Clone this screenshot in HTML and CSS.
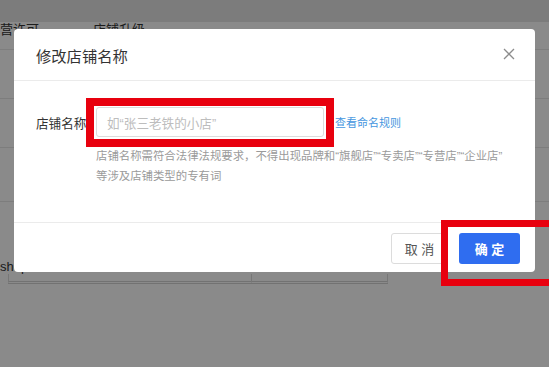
FILE: index.html
```html
<!DOCTYPE html>
<html lang="zh-CN">
<head>
<meta charset="utf-8">
<title>修改店铺名称</title>
<link rel="stylesheet" href="styles.css">
</head>
<body>
<div class="page">
  <div class="topband"></div>
  <div class="tabs">
    <span class="tab">营许可</span>
    <span class="tab">店铺升级</span>
  </div>
  <div class="row"></div>
  <div class="row"></div>
  <div class="row row-tall"></div>
  <div class="row row-last"><span class="cell-text">shop</span></div>
  <div class="fields">
    <div class="field field-a"></div>
    <div class="field field-b"></div>
  </div>
</div>
<div class="mask"></div>
<div class="modal">
  <div class="modal-header">
    <span class="modal-title">修改店铺名称</span>
    <svg class="close" width="12" height="12" viewBox="0 0 12 12"><path d="M1 1L11 11M11 1L1 11" stroke="#8c8c8c" stroke-width="1.3" fill="none"/></svg>
  </div>
  <div class="modal-body">
    <div class="form-row">
      <span class="label">店铺名称</span>
      <div class="input">如“张三老铁的小店”</div>
      <a class="link">查看命名规则</a>
    </div>
    <p class="help">店铺名称需符合法律法规要求，不得出现品牌和“旗舰店”“专卖店”“专营店”“企业店”<br>等涉及店铺类型的专有词</p>
  </div>
  <div class="modal-footer">
    <button class="btn btn-cancel">取 消</button>
    <button class="btn btn-ok">确 定</button>
  </div>
</div>
<div class="mark mark-input"></div>
<div class="mark mark-ok"></div>
</body>
</html>
```

FILE: styles.css
```css
* { box-sizing: border-box; }
html, body {
  margin: 0;
  padding: 0;
  width: 549px;
  height: 367px;
  overflow: hidden;
  background: #fff;
  font-family: "Liberation Sans", "Noto Sans CJK SC", sans-serif;
}
.page {
  display: flex;
  flex-direction: column;
  width: 549px;
  height: 367px;
  background: #fbfbfb;
}
.topband {
  height: 22px;
  background: #e2e2e2;
}
.tabs {
  height: 28px;
  display: flex;
  align-items: flex-start;
  gap: 54px;
  border-bottom: 1px solid #e6e6e6;
  font-size: 13px;
  line-height: 14px;
  color: #333;
  padding-top: 1px;
}
.row {
  height: 49px;
  border-bottom: 1px solid #e4e4e4;
}
.row-tall { height: 54px; }
.row-last {
  height: 72px;
  border-bottom: none;
  display: flex;
  align-items: flex-end;
  font-size: 13px;
  color: #333;
}
.fields {
  display: flex;
  margin-left: 8px;
  height: 10px;
}
.field {
  height: 10px;
  border: 1px solid #d9d9d9;
  border-top: none;
  border-bottom: 3px double #cfcfcf;
}
.field-a { width: 244px; }
.field-b { width: 136px; border-left: none; }
.mask {
  position: absolute;
  inset: 0;
  background: rgba(0, 0, 0, 0.45);
}
.modal {
  position: absolute;
  left: 14px;
  top: 29px;
  width: 521px;
  height: 243px;
  background: #fff;
  border-radius: 4px;
  display: flex;
  flex-direction: column;
}
.modal-header {
  height: 52px;
  flex: none;
  display: flex;
  align-items: center;
  justify-content: space-between;
  padding: 0 20px 0 22px;
  border-bottom: 1px solid #ebebeb;
}
.modal-title {
  font-size: 15.3px;
  color: #333;
}
.close { display: block; margin-top: -1px; }
.modal-body {
  flex: 1;
  padding: 26px 0 0 22px;
}
.form-row {
  display: flex;
  align-items: center;
}
.label {
  width: 60px;
  font-size: 12.6px;
  color: #333;
}
.input {
  width: 228px;
  height: 30px;
  border: 1px solid #dcdcdc;
  border-radius: 3px;
  padding-left: 10px;
  display: flex;
  align-items: center;
  font-size: 12.6px;
  color: #bdbdbd;
}
.link {
  margin-left: 11px;
  font-size: 11px;
  color: #4596e0;
}
.help {
  margin: 9px 0 0 60px;
  font-size: 11.4px;
  line-height: 20px;
  color: #9a9a9a;
}
.modal-footer {
  height: 50px;
  flex: none;
  border-top: 1px solid #ebebeb;
  display: flex;
  justify-content: flex-end;
  align-items: flex-start;
  gap: 11px;
  padding: 10px 15px 0 0;
}
.btn {
  height: 31px;
  border-radius: 3px;
  font-family: "Liberation Sans", "Noto Sans CJK SC", sans-serif;
  font-size: 13px;
  padding: 0;
}
.btn-cancel {
  width: 57px;
  background: #fff;
  border: 1px solid #dcdcdc;
  color: #555;
}
.btn-ok {
  width: 61px;
  background: #2f6df0;
  border: none;
  color: #fff;
  font-weight: bold;
}
.mark {
  position: absolute;
  border: 8px solid #e8000e;
}
.mark-input {
  left: 86px;
  top: 98px;
  width: 248px;
  height: 49px;
}
.mark-ok {
  left: 441px;
  top: 220px;
  width: 118px;
  height: 66px;
  border-width: 7px;
}
```
